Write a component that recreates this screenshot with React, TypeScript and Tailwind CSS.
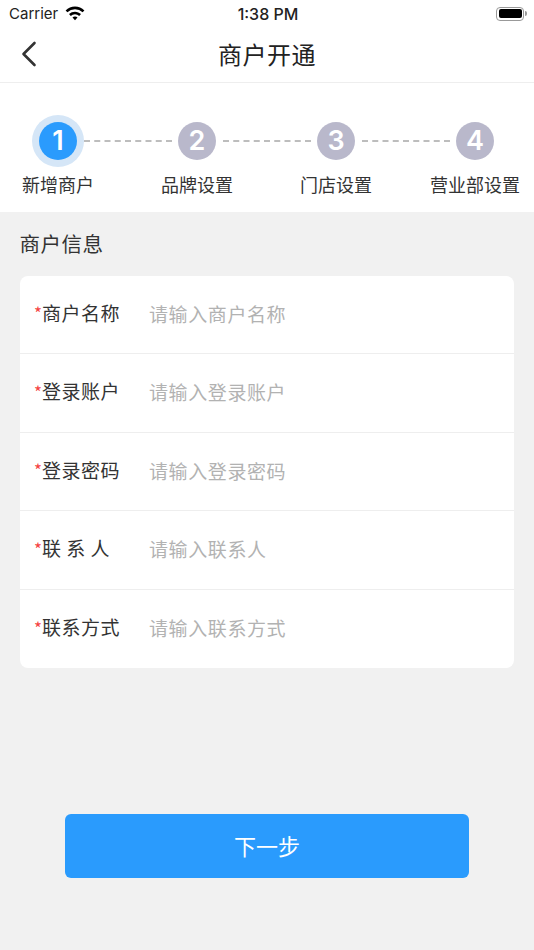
const CJK = 'font-["Noto_Sans_CJK_SC","Noto_Sans",sans-serif]'

const steps = ['新增商户', '品牌设置', '门店设置', '营业部设置']

const fields = [
  { label: '商户名称', placeholder: '请输入商户名称' },
  { label: '登录账户', placeholder: '请输入登录账户' },
  { label: '登录密码', placeholder: '请输入登录密码' },
  { label: '联 系 人', placeholder: '请输入联系人' },
  { label: '联系方式', placeholder: '请输入联系方式' },
]

function StatusBar() {
  return (
    <div className='h-[27px] flex items-center justify-between pl-[9px] pr-[7px] font-["Inter",sans-serif] text-[#222]'>
      <div className="flex items-center gap-[7px] w-[120px]">
        <span className="text-[15px] mt-[2px]">Carrier</span>
        <svg width="20" height="15" viewBox="0 0 20 15" className="-mt-[1px]">
          <path d="M10 .6c3.600 0 6.900 1.400 9.400 3.800l-1.800 1.900A10.900 10.900 0 0 0 10 3.300a10.900 10.900 0 0 0-7.600 3L.6 4.400A13.600 13.600 0 0 1 10 .6z" fill="#000" />
          <path d="M10 5.700c2.300 0 4.400.9 6 2.400l-1.800 1.900A6.200 6.200 0 0 0 10 8.300a6.200 6.200 0 0 0-4.200 1.700L4 8.100a8.800 8.800 0 0 1 6-2.400z" fill="#000" />
          <path d="M10 10.500c1 0 1.900.4 2.500 1L10 14.300l-2.500-2.800c.6-.6 1.500-1 2.500-1z" fill="#000" />
        </svg>
      </div>
      <span className="text-[16px] font-medium">1:38 PM</span>
      <div className="w-[120px] flex justify-end items-center">
        <div className="w-[28px] h-[14px] rounded-[4px] border border-[#999] p-[1.5px]">
          <div className="w-full h-full rounded-[2px] bg-black" />
        </div>
        <div className="w-[1.500px] h-[5px] bg-[#999] rounded-r-sm ml-[1px]" />
      </div>
    </div>
  )
}

function Stepper() {
  return (
    <div className="h-[129px] bg-white flex gap-[67px] pl-[22px] pt-[39px]">
      {steps.map((s, i) => (
        <div key={s} className="relative flex flex-col items-center w-[72px] shrink-0">
          <div
            className={
              'size-[38px] rounded-full flex items-center justify-center text-white text-[27px] font-["Inter",sans-serif] font-semibold ' +
              (i === 0 ? 'bg-[#2a9bfd] ring-[7px] ring-[#d5e6f7]' : 'bg-[#b9b8cb]')
            }
          >
            {i + 1}
          </div>
          <span className={`mt-[12px] text-[18px] leading-[24px] whitespace-nowrap text-[#333] ${CJK}`}>{s}</span>
          {i < 3 && <div className="absolute top-[18px] left-[62px] w-[88px] h-0 border-t-2 border-dashed border-[#bdbdbd]" />}
        </div>
      ))}
    </div>
  )
}

export default function App() {
  return (
    <div className={`w-[534px] h-[950px] bg-[#f1f1f1] flex flex-col overflow-hidden ${CJK}`}>
      <div className="bg-white">
        <StatusBar />
        <div className="relative h-[56px] flex items-center justify-center border-b border-[#eeeeee]">
          <svg width="16" height="26" viewBox="0 0 16 26" fill="none" className="absolute left-[21px] top-[14px]">
            <path d="M13.500 2 2.500 13l11 11" stroke="#333" strokeWidth="2.600" strokeLinecap="round" strokeLinejoin="round" />
          </svg>
          <span className={`text-[24px] leading-[32px] -mt-[2px] text-[#222] tracking-[0.5px] ${CJK}`}>商户开通</span>
        </div>
      </div>

      <Stepper />

      <div className="pl-[19.500px] pt-[16px] text-[20.500px] leading-[30px] text-[#333] tracking-[0.5px]">商户信息</div>

      <div className="mx-[20px] mt-[18px] bg-white rounded-[8px] flex flex-col">
        {fields.map((f, i) => (
          <div
            key={f.label}
            className={
              'h-[78.400px] flex items-center pl-[14px] ' +
              (i < fields.length - 1 ? 'border-b border-[#eeeeee]' : '')
            }
          >
            <div className="w-[115px] flex items-center -mt-[3px] text-[19px] tracking-[0.5px] text-[#333] whitespace-pre">
              <span className="w-[8px] text-[17px] text-[#f54343] tracking-normal">*</span>
              <span>{f.label}</span>
            </div>
            <span className="text-[19px] -mt-[1px] tracking-[0.6px] text-[#b2b2b2]">{f.placeholder}</span>
          </div>
        ))}
      </div>

      <div className="mx-[65px] mt-[146px] h-[64px] bg-[#2a9bfd] rounded-[6px] flex items-center justify-center text-white text-[22px]">
        下一步
      </div>
    </div>
  )
}
